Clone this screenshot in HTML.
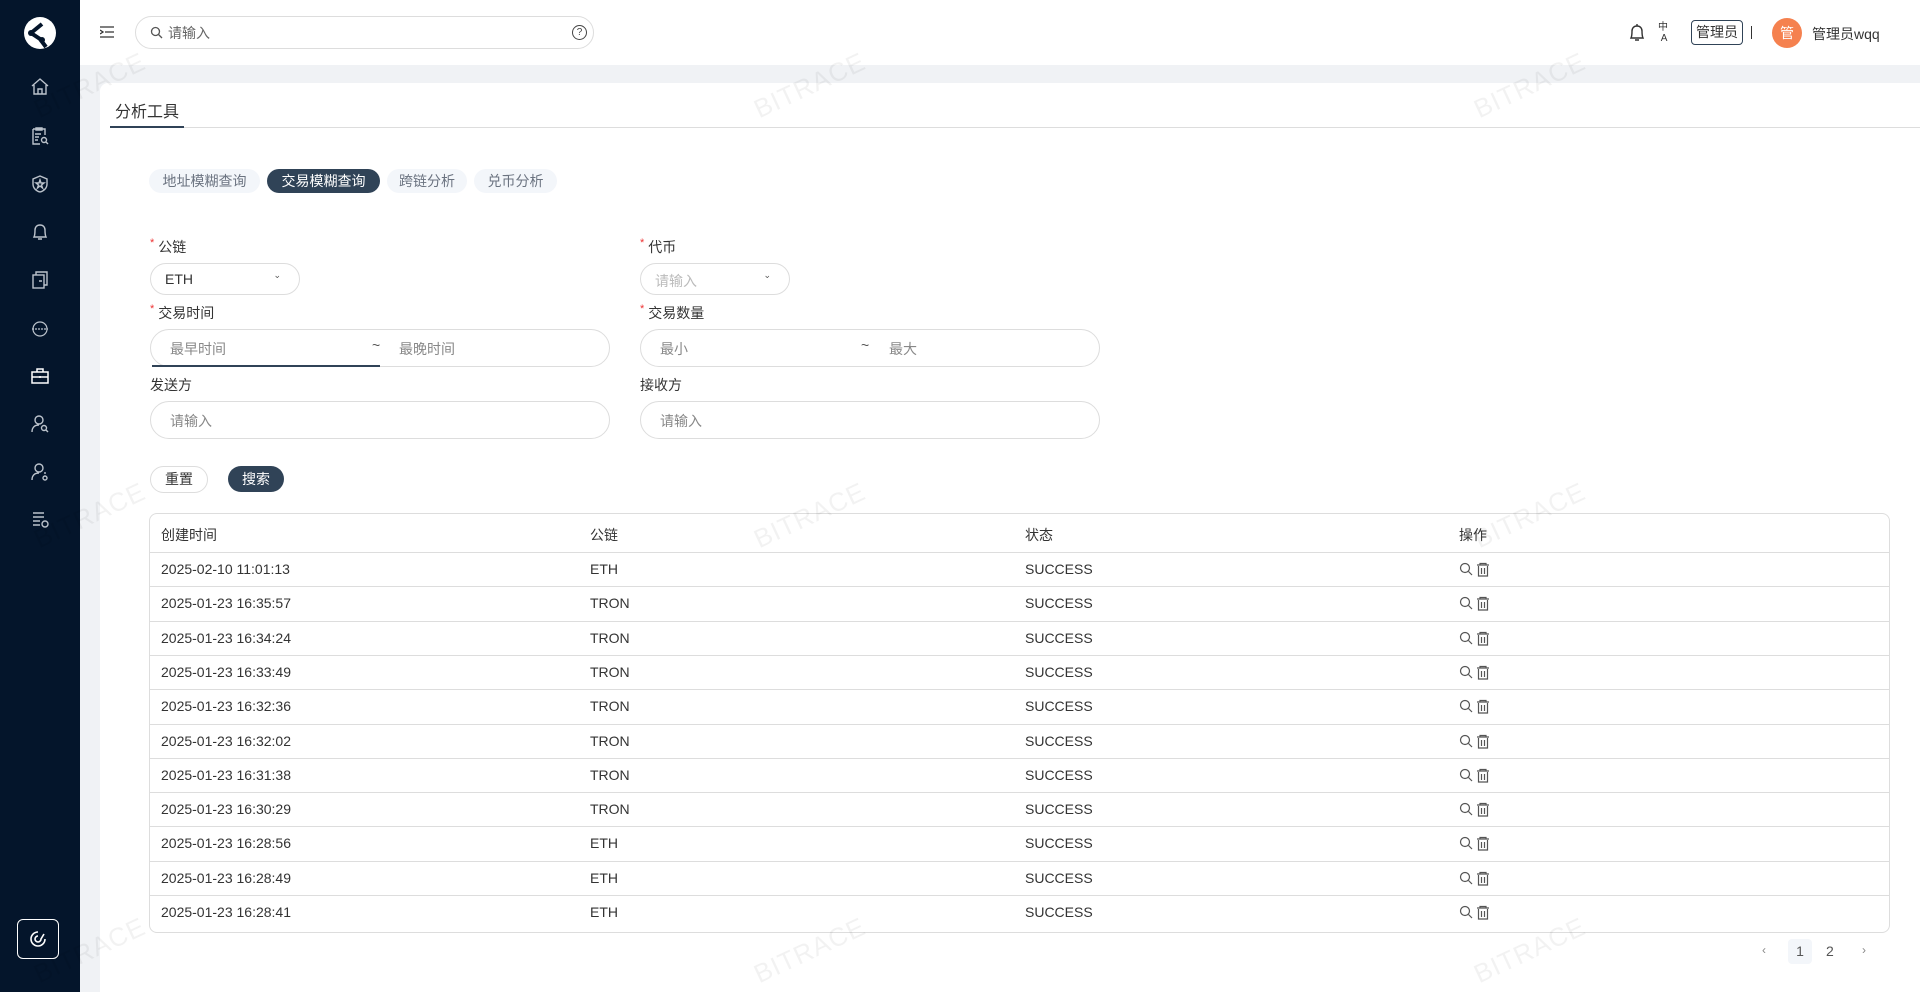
<!DOCTYPE html>
<html><head><meta charset="utf-8"><style>
*{box-sizing:border-box;margin:0;padding:0}
body{width:1920px;height:992px;overflow:hidden;font-family:"Liberation Sans","Noto Sans CJK SC",sans-serif;font-size:14px;color:#333;background:#fff;position:relative}
.abs{position:absolute}
.side{left:0;top:0;width:80px;height:992px;background:#04152b}
.side svg{position:absolute;left:30px}
.hdr{left:80px;top:0;width:1840px;height:65px;background:#fff}
.band{left:80px;top:65px;width:1840px;height:927px;background:#f0f2f5}
.card{left:100px;top:83px;width:1820px;height:909px;background:#fff;border-radius:8px 0 0 0}
.chip{top:169px;height:24px;line-height:24px;border-radius:12px;background:#f3f6fa;color:#6b7380;font-size:14px;text-align:center}
.chip.on{background:#304357;color:#fff}
.lbl{font-size:14px;color:#333}
.lbl b{color:#e33;font-weight:normal;font-size:11px;margin-right:4px;vertical-align:top}
.inp{border:1px solid #ddd;border-radius:19px;background:#fff;color:#aaa;font-size:14px}
.tbl{left:149px;top:513px;width:1741px;height:420px;border:1px solid #ddd;border-radius:8px;overflow:hidden}
.row{position:absolute;left:0;width:100%;height:34.3px;border-top:1px solid #ddd;font-size:14px;color:#333}
.row span{position:absolute;top:8px}
.wm{color:rgba(0,0,0,.05);font-size:26px;transform:rotate(-25deg);letter-spacing:1px}
</style></head><body>
<div class="abs side">
<svg style="left:22px;top:15px" width="36" height="36" viewBox="0 0 36 36"><circle cx="18" cy="18" r="16" fill="#fff"/><path d="M9 18 L20 9 M9 18 L18 24 L24 32" stroke="#04152b" stroke-width="4" fill="none"/><circle cx="9" cy="18" r="3" fill="#04152b"/><circle cx="20" cy="25" r="3" fill="#04152b"/></svg>
<svg style="top:78px" width="20" height="18" viewBox="0 0 20 18" fill="none" stroke="#bcc3cc" stroke-width="1.4"><path d="M2 8 L10 1 L18 8 M4 7 V16 H16 V7 M8 16 V11 H12 V16"/></svg>
<svg style="top:126px" width="20" height="20" viewBox="0 0 20 20" fill="none" stroke="#bcc3cc" stroke-width="1.4"><path d="M3 3 H15 V9 M3 3 V18 H10 M6 2 H12 V4 H6Z M5 8 H11 M5 11 H9 M5 14 H8"/><circle cx="14" cy="14" r="2.5"/><path d="M16 16 L18 18"/></svg>
<svg style="top:174px" width="20" height="20" viewBox="0 0 20 20" fill="none" stroke="#bcc3cc" stroke-width="1.4"><path d="M10 2 L17 5 V10 C17 14 14 17 10 18 C6 17 3 14 3 10 V5Z"/><path d="M10 6 L11 9 H14 L11.5 11 L12.5 14 L10 12 L7.5 14 L8.5 11 L6 9 H9Z"/></svg>
<svg style="top:222px" width="20" height="20" viewBox="0 0 20 20" fill="none" stroke="#bcc3cc" stroke-width="1.4"><path d="M4 15 C5 13 5 11 5 8 C5 5 7 3 10 3 C13 3 15 5 15 8 C15 11 15 13 16 15Z M8 17 H12"/></svg>
<svg style="top:270px" width="20" height="20" viewBox="0 0 20 20" fill="none" stroke="#bcc3cc" stroke-width="1.4"><rect x="3" y="5" width="11" height="13"/><path d="M6 5 V2 H17 V15 H14 M9 11 H12"/></svg>
<svg style="top:319px" width="20" height="20" viewBox="0 0 20 20" fill="none" stroke="#bcc3cc" stroke-width="1.2"><circle cx="10" cy="10" r="7"/><path d="M2 10 H18" stroke-dasharray="2 1"/></svg>
<svg style="top:367px" width="20" height="18" viewBox="0 0 20 18" fill="none" stroke="#fff" stroke-width="1.5"><rect x="2" y="5" width="16" height="11"/><path d="M7 5 V2 H13 V5 M2 10 H18 M10 9 V11"/></svg>
<svg style="top:414px" width="20" height="20" viewBox="0 0 20 20" fill="none" stroke="#bcc3cc" stroke-width="1.4"><circle cx="9" cy="6" r="4"/><path d="M2 18 C2 13 5 11 9 11"/><circle cx="14" cy="14" r="2.5"/><path d="M16 16 L18 18"/></svg>
<svg style="top:462px" width="20" height="20" viewBox="0 0 20 20" fill="none" stroke="#bcc3cc" stroke-width="1.4"><circle cx="9" cy="6" r="4"/><path d="M2 18 C2 13 5 11 9 11 M15 10 V12"/><circle cx="15" cy="16" r="2"/></svg>
<svg style="top:510px" width="20" height="20" viewBox="0 0 20 20" fill="none" stroke="#bcc3cc" stroke-width="1.4"><path d="M3 3 H14 M3 7 H14 M3 11 H10 M3 15 H10"/><circle cx="15" cy="14" r="3"/></svg>
<div class="abs" style="left:17px;top:919px;width:42px;height:40px;border:1.5px solid #fff;border-radius:6px"></div>
<svg style="left:29px;top:930px" width="18" height="18" viewBox="0 0 18 18" fill="none" stroke="#fff" stroke-width="1.6"><path d="M9 2 A7 7 0 1 0 16 9 M9 6 A3 3 0 1 0 12 9 L15 4"/></svg>
</div>
<div class="abs hdr">
<svg class="abs" style="left:20px;top:26px" width="14" height="12" viewBox="0 0 14 12" stroke="#333" stroke-width="1.3" fill="none"><path d="M0 1 H14 M5 6 H14 M0 11 H14 M0 4 L3 6 L0 8"/></svg>
<div class="abs" style="left:55px;top:16px;width:459px;height:33px;border:1px solid #ddd;border-radius:17px"></div>
<svg class="abs" style="left:70px;top:26px" width="13" height="13" viewBox="0 0 13 13" fill="none" stroke="#555" stroke-width="1.3"><circle cx="5.5" cy="5.5" r="4"/><path d="M8.5 8.5 L12 12"/></svg>
<div class="abs" style="left:88px;top:23px;color:#666">请输入</div>
<div class="abs" style="left:492px;top:25px;width:15px;height:15px;border:1.3px solid #444;border-radius:50%;font-size:10px;text-align:center;line-height:13px;color:#444">?</div>
<svg class="abs" style="left:1548px;top:23px" width="18" height="20" viewBox="0 0 18 20" fill="none" stroke="#333" stroke-width="1.4"><path d="M3 15 C4 13 4 10 4 8 C4 5 6 3 9 3 C12 3 14 5 14 8 C14 10 14 13 15 15Z M7 17 H11 M9 1 V3"/></svg>
<div class="abs" style="left:1578px;top:22px;font-size:10px;line-height:11px;color:#333">中<br>&nbsp;A</div>
<div class="abs" style="left:1611px;top:20px;width:52px;height:25px;border:1px solid #304357;border-radius:4px;text-align:center;line-height:23px;color:#333">管理员</div>
<div class="abs" style="left:1671px;top:26px;width:1px;height:13px;background:#333"></div>
<div class="abs" style="left:1692px;top:18px;width:30px;height:30px;border-radius:50%;background:#f5814f;color:#fff;text-align:center;line-height:30px">管</div>
<div class="abs" style="left:1732px;top:24px;color:#333">管理员wqq</div>
</div>
<div class="abs band"></div>
<div class="abs card"></div>
<div class="abs" style="left:115px;top:98px;font-size:16px;color:#333">分析工具</div>
<div class="abs" style="left:110px;top:127px;width:1810px;height:1px;background:#ddd"></div>
<div class="abs" style="left:110px;top:126px;width:74px;height:2px;background:#304357"></div>
<div class="abs chip" style="left:149px;width:111px">地址模糊查询</div>
<div class="abs chip on" style="left:267px;width:113px">交易模糊查询</div>
<div class="abs chip" style="left:387px;width:80px">跨链分析</div>
<div class="abs chip" style="left:474px;width:83px">兑币分析</div>

<div class="abs lbl" style="left:150px;top:237px"><b>*</b>公链</div>
<div class="abs inp" style="left:150px;top:263px;width:150px;height:32px;color:#333;padding:7px 14px">ETH<span style="position:absolute;right:18px;top:6px;font-size:9px;color:#555">⌄</span></div>
<div class="abs lbl" style="left:640px;top:237px"><b>*</b>代币</div>
<div class="abs inp" style="left:640px;top:263px;width:150px;height:32px;color:#bbb;padding:7px 14px">请输入<span style="position:absolute;right:18px;top:6px;font-size:9px;color:#555">⌄</span></div>

<div class="abs lbl" style="left:150px;top:303px"><b>*</b>交易时间</div>
<div class="abs inp" style="left:150px;top:329px;width:460px;height:38px"></div>
<div class="abs" style="left:152px;top:365px;width:228px;height:1.5px;background:#304357"></div>
<div class="abs" style="left:170px;top:339px;color:#888">最早时间</div>
<div class="abs" style="left:372px;top:337px;color:#555">~</div>
<div class="abs" style="left:399px;top:339px;color:#888">最晚时间</div>
<div class="abs lbl" style="left:640px;top:303px"><b>*</b>交易数量</div>
<div class="abs inp" style="left:640px;top:329px;width:460px;height:38px"></div>
<div class="abs" style="left:660px;top:339px;color:#888">最小</div>
<div class="abs" style="left:861px;top:337px;color:#555">~</div>
<div class="abs" style="left:889px;top:339px;color:#888">最大</div>

<div class="abs lbl" style="left:150px;top:375px">发送方</div>
<div class="abs inp" style="left:150px;top:401px;width:460px;height:38px"></div>
<div class="abs" style="left:170px;top:411px;color:#888">请输入</div>
<div class="abs lbl" style="left:640px;top:375px">接收方</div>
<div class="abs inp" style="left:640px;top:401px;width:460px;height:38px"></div>
<div class="abs" style="left:660px;top:411px;color:#888">请输入</div>

<div class="abs" style="left:150px;top:466px;width:58px;height:27px;border:1px solid #ddd;border-radius:14px;text-align:center;line-height:25px;color:#333">重置</div>
<div class="abs" style="left:228px;top:466px;width:56px;height:26px;background:#304357;border-radius:13px;text-align:center;line-height:26px;color:#fff">搜索</div>

<div class="abs tbl">
<div class="row" style="top:0;border-top:none;height:38px"><span style="left:11px;top:11px">创建时间</span><span style="left:440px;top:11px">公链</span><span style="left:875px;top:11px">状态</span><span style="left:1309px;top:11px">操作</span></div>
</div>
<div class="abs" style="left:1762px;top:943px;color:#888;font-size:12px">‹</div>
<div class="abs" style="left:1788px;top:939px;width:24px;height:25px;background:#f3f6fa;border-radius:4px;text-align:center;line-height:25px;color:#555">1</div>
<div class="abs" style="left:1826px;top:943px;color:#555">2</div>
<div class="abs" style="left:1862px;top:943px;color:#888;font-size:12px">›</div>

<div class="abs wm" style="left:30px;top:70px">BITRACE</div>
<div class="abs wm" style="left:750px;top:70px">BITRACE</div>
<div class="abs wm" style="left:1470px;top:70px">BITRACE</div>
<div class="abs wm" style="left:30px;top:500px">BITRACE</div>
<div class="abs wm" style="left:750px;top:500px">BITRACE</div>
<div class="abs wm" style="left:1470px;top:500px">BITRACE</div>
<div class="abs wm" style="left:30px;top:935px">BITRACE</div>
<div class="abs wm" style="left:750px;top:935px">BITRACE</div>
<div class="abs wm" style="left:1470px;top:935px">BITRACE</div>
<script>
var d=[["2025-02-10 11:01:13","ETH"],["2025-01-23 16:35:57","TRON"],["2025-01-23 16:34:24","TRON"],["2025-01-23 16:33:49","TRON"],["2025-01-23 16:32:36","TRON"],["2025-01-23 16:32:02","TRON"],["2025-01-23 16:31:38","TRON"],["2025-01-23 16:30:29","TRON"],["2025-01-23 16:28:56","ETH"],["2025-01-23 16:28:49","ETH"],["2025-01-23 16:28:41","ETH"]];
var t=document.querySelector('.tbl'),h='';
var ic='<svg style="position:absolute;left:1309px;top:9px" width="34" height="15" viewBox="0 0 34 15" fill="none" stroke="#555" stroke-width="1.2"><circle cx="6" cy="6" r="4.5"/><path d="M9.5 9.5 L13 13"/><path d="M18 3 H30 M21 3 V1.5 H27 V3 M19.5 4 V14 H28.5 V4 M22.5 6 V12 M25.5 6 V12" /></svg>';
d.forEach(function(r,i){h+='<div class="row" style="top:'+(38+i*34.3)+'px"><span style="left:11px">'+r[0]+'</span><span style="left:440px">'+r[1]+'</span><span style="left:875px">SUCCESS</span>'+ic+'</div>';});
t.insertAdjacentHTML('beforeend',h);
</script>
</body></html>
